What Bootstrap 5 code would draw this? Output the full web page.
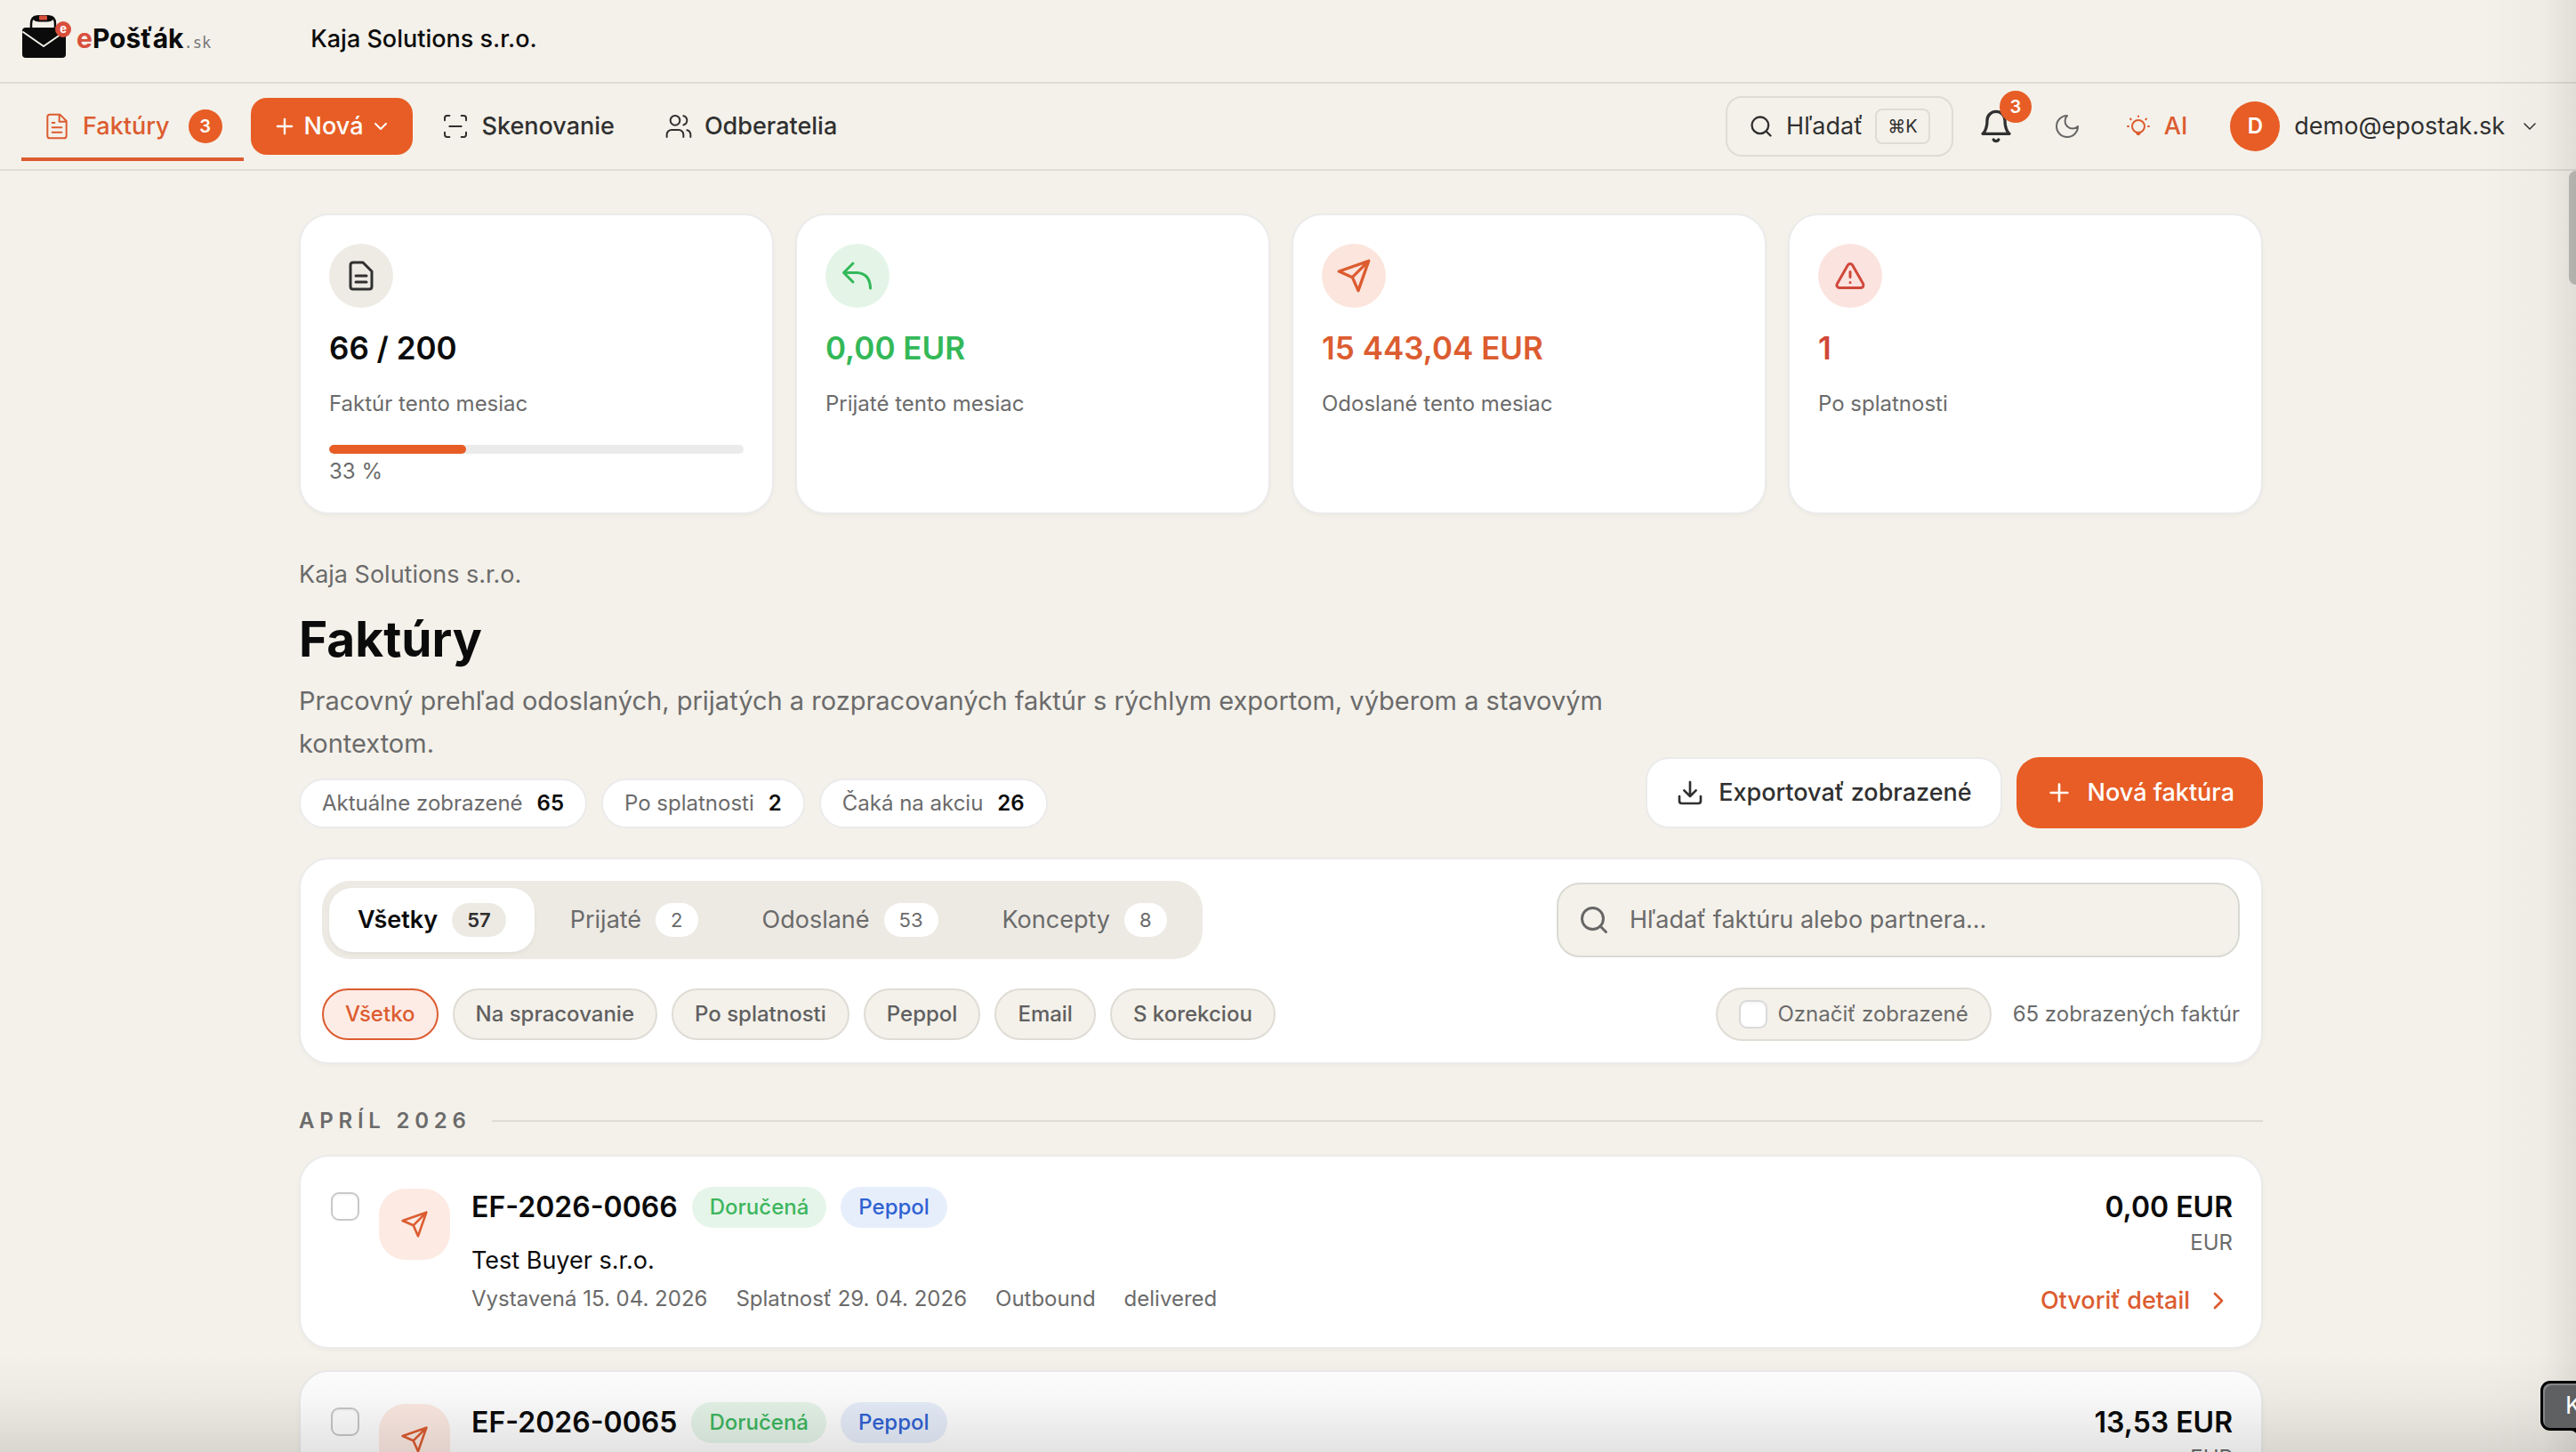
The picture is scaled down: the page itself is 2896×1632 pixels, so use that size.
<!DOCTYPE html>
<html lang="sk">
<head>
<meta charset="utf-8">
<meta name="viewport" content="width=device-width, initial-scale=1">
<title>Faktúry – ePošťák</title>
<link href="https://cdn.jsdelivr.net/npm/bootstrap@5.3.0/dist/css/bootstrap.min.css" rel="stylesheet">
<style>
:root{--paper:#f4f1ea;--line:#dfdcd5;--soft:#ebebeb;--ink:#0b0b0b;--ink2:#303030;--muted:#6b6b6b;--brand:#e75d25;--brand-ink:#dc5c30}
body{font-family:Inter,"Noto Sans",sans-serif;font-size:27px;line-height:40px;color:var(--ink);background:var(--paper)}
svg{display:block;flex:none;fill:none;stroke:currentColor;stroke-width:2;stroke-linecap:round;stroke-linejoin:round}
button{font:inherit;color:inherit}
a{color:inherit;text-decoration:none}
.i24{width:24px;height:24px}.i28{width:28px;height:28px}.i32{width:32px;height:32px}.i36{width:36px;height:36px}.i40{width:40px;height:40px}
.thin{stroke-width:1.5}
.app-shell{position:relative;height:100vh;overflow:hidden}
.small-text{font-size:24px;line-height:40px}
.text-soft{color:var(--muted)}
.orange{color:var(--brand-ink)}

.topbar{padding:16px 24px 20px;border-bottom:2px solid var(--line)}
.brand-logo{gap:6px;margin-right:112px}
.brand-name{font-size:30px;font-weight:700}
.brand-name i{font-style:normal;color:#d84f3c}
.brand-tld{font:17px "DejaVu Sans Mono",monospace;color:#777}
.brand-mark{width:56px;height:56px}
.company{font-weight:500}

.mainnav{height:98px;padding:0 24px;border-bottom:2px solid var(--line);gap:8px}
.nav-tab{height:78px;padding:0 24px;gap:13px;border:solid transparent;border-width:4px 0;font-weight:500;color:var(--ink2)}
.nav-tab.current{color:var(--brand-ink);border-bottom-color:var(--brand-ink)}
.dot-count{height:38px;min-width:38px;border-radius:19px;background:var(--brand);color:#fff;font-size:20px;font-weight:600}
.nav-tab .dot-count{margin-left:8px}
.btn-brand,.btn-brand:hover{background:var(--brand);color:#fff;border:0}
.btn-new,.btn-tall{font-size:27px;line-height:40px;font-weight:500;white-space:nowrap;flex:none}
.btn-new{height:64px;padding:0 24px;gap:8px;border-radius:18px}
.plain{border:0;background:none;padding:0;height:72px;color:var(--ink2)}
.btn-find{height:68px;padding:0 24px;gap:14px;border:2px solid var(--line);border-radius:18px;background:none;color:var(--ink2)}
.btn-find kbd{font:20px/24px Inter,sans-serif;color:var(--ink2);background:none;border:2px solid var(--line);border-radius:8px;padding:6px 12px}
.tools{gap:12px}
.bell{width:72px}
.bell .dot-count{position:absolute;left:40px;top:-4px;height:36px;min-width:36px}
.moon{width:64px;color:#666}
.ai{padding:0 20px;gap:13px;color:var(--brand-ink);font-weight:500}
.user{padding:0 16px;gap:16px}
.avatar{width:56px;height:56px;border-radius:50%;background:var(--brand);color:#fff;font-size:24px;font-weight:600}

.page{padding:48px 16px 0 0}
.page-inner{max-width:2208px;margin:0 auto}
.panel{background:#fff;border:2px solid var(--soft);border-radius:34px;box-shadow:0 2px 4px rgba(0,0,0,.03)}
.stats{display:grid;grid-template-columns:repeat(4,1fr);gap:24px;margin-bottom:48px}
.stat{padding:32px 32px 26px}
.stat-icon{width:72px;height:72px;border-radius:50%;margin-bottom:23px}
.stat-value{font-size:35px;line-height:44px;font-weight:600;margin-bottom:21px}
.meter{height:10px;margin-top:26px;border-radius:5px;background:#ebebeb}
.meter .progress-bar{background:var(--brand);border-radius:5px}

.page-title{font-size:55px;line-height:64px;font-weight:700;margin:20px 0 14px}
.page-desc{font-size:29px;line-height:48px;max-width:1520px;margin:0 0 15px}
.heading{margin-bottom:33px}
.fact{height:56px;padding:0 24px;gap:16px;background:#fff;border:2px solid var(--soft);border-radius:28px}
.fact strong{font-weight:600;color:var(--ink)}
.btn-tall{height:80px;padding:0 32px;gap:16px;border-radius:26px}
.btn-export,.btn-export:hover{background:#fff;color:var(--ink2);border:2px solid var(--soft);padding:0 32px}

.toolbar{padding:24px;margin-bottom:44px}
.seg{background:#edeae4;border-radius:32px;padding:8px;gap:8px}
.seg button{height:72px;padding:0 32px;gap:16px;border:0;background:none;border-radius:26px;color:var(--muted)}
.seg button.on{background:#fff;color:var(--ink);font-weight:600;box-shadow:0 2px 4px rgba(0,0,0,.05)}
.seg .num{height:38px;padding:0 17px;border-radius:19px;background:#fff;font-size:22px;line-height:38px}
.seg .on .num{background:#edeae4;color:var(--ink2)}
.finder{width:768px;height:84px;padding:0 22px;gap:22px;background:var(--paper);border:2px solid #d9dad3;border-radius:26px;color:#666}
.finder input{border:0;background:none;outline:0;padding:0;color:var(--ink)}
.finder input::placeholder{color:#6b6b6b;opacity:1}
.filters{margin-top:32px}
.chip{height:58px;padding:0 24px;border:2px solid var(--line);border-radius:29px;background:var(--paper);color:#606060;font-weight:500}
.chip.on{background:#fdece6;border-color:var(--brand-ink);color:var(--brand-ink)}
.mark-all{height:60px;padding:0 24px;gap:12px;border:2px solid var(--line);border-radius:30px;background:var(--paper)}
.tick.form-check-input{width:32px;height:32px;margin:0;border:2px solid #c8c8c8;border-radius:9px;flex:none;background-color:#fff;box-shadow:inset 0 2px 2px rgba(0,0,0,.04)}
.mark-all .tick.form-check-input{border-color:#dadada}
.month{gap:23px;margin-bottom:18px;font-weight:600;letter-spacing:.24em}
.month hr{margin:0;border:0;border-top:2px solid var(--line);opacity:1}

.invoice{padding:32px;margin-bottom:24px}
.tick-col{width:36px;margin:8px 20px 0 0}
.tile{width:80px;height:80px;border-radius:30px;margin:4px 24px 0 0;background:#fdeae3;color:var(--brand-ink)}
.inv-title{font-size:32px;line-height:50px;font-weight:600}
.inv-head{margin-bottom:15px}
.tag{height:46px;padding:0 20px;border-radius:23px;font-size:24px;line-height:46px;font-weight:500}
.tag-ok{background:#e6f5e9;color:#3db65f}
.tag-net{background:#e7eefb;color:#2f62d3}
.inv-meta{gap:32px;margin-top:3px}
.currency{font-size:24px;line-height:30px}
.detail{margin-top:30px;gap:16px;font-weight:500}

.thumb{position:absolute;right:0;top:192px;width:8px;height:128px;border-radius:8px 0 0 8px;background:#c1bfb9}
.shade-b,.shade-r{position:absolute;pointer-events:none;right:0;bottom:0}
.shade-b{left:0;height:110px;background:linear-gradient(rgba(0,0,0,0),rgba(0,0,0,.03) 45%,rgba(0,0,0,.11))}
.shade-r{top:0;width:110px;background:linear-gradient(90deg,rgba(0,0,0,0),rgba(0,0,0,.02) 65%,rgba(0,0,0,.08))}
.dock-tip{position:absolute;right:-4px;top:1552px;width:44px;height:56px;padding-left:25px;border:3px solid #000;border-right:0;border-radius:11px 0 0 11px;background:#5f6062;box-shadow:inset 2px 2px 0 #858688;color:#fff;line-height:50px}
.dock-tip svg{position:absolute;left:32px;top:50px;width:12px;height:12px;stroke:#000;stroke-width:3;fill:#5f6062}
</style>
</head>
<body>
<svg width="0" height="0" class="position-absolute" aria-hidden="true">
<symbol id="plus" viewBox="0 0 24 24"><path d="M5 12h14M12 5v14"/></symbol>
<symbol id="down" viewBox="0 0 24 24"><path d="m6 9 6 6 6-6"/></symbol>
<symbol id="search" viewBox="0 0 24 24"><circle cx="11" cy="11" r="8"/><path d="m21 21-4.3-4.3"/></symbol>
<symbol id="send" viewBox="0 0 24 24"><path d="m22 2-7 20-4-9-9-4ZM22 2 11 13"/></symbol>
</svg>
<div class="app-shell">
<header>
  <div class="topbar d-flex align-items-center">
    <a href="#" class="brand-logo d-flex align-items-center">
      <svg class="brand-mark" viewBox="0 0 56 56" stroke="none">
        <path d="M11 17V11Q11 2.500 18 2.500H31Q38 2.500 38 11V17" stroke="#0b0b0b" stroke-width="2.500"/>
        <path d="M13 6Q16 1 20 1H29Q33 1 36 6Q33 8.500 29 8.500H20Q16 8.500 13 6Z" fill="#0b0b0b" stroke="none"/>
        <rect x="20" y="1.500" width="9" height="5" rx="1" fill="#d84f3c" stroke="none"/>
        <rect x="1" y="15" width="49" height="34" rx="4" fill="#0b0b0b" stroke="none"/>
        <path d="M2 20 25 36 48 20" stroke="#f4f1ea" stroke-width="2"/>
        <circle cx="47" cy="17" r="9" fill="#d84f3c" stroke="none"/>
        <text x="47" y="21" font-size="13" font-weight="700" text-anchor="middle" fill="#fff" stroke="none">e</text>
      </svg>
      <span><span class="brand-name"><i>e</i>Pošťák</span><span class="brand-tld">.sk</span></span>
    </a>
    <span class="company">Kaja Solutions s.r.o.</span>
  </div>
  <nav class="mainnav d-flex align-items-center">
    <a href="#" class="nav-tab current d-flex align-items-center" aria-current="page">
      <svg class="i32 thin" viewBox="0 0 24 24"><path d="M14.500 2H6a2 2 0 0 0-2 2v16a2 2 0 0 0 2 2h12a2 2 0 0 0 2-2V7.500ZM14 2v6h6M8 9h2M8 13h8M8 17h8"/></svg>
      Faktúry<span class="dot-count d-flex align-items-center justify-content-center">3</span></a>
    <button type="button" class="btn btn-brand btn-new d-flex align-items-center"><svg class="i28"><use href="#plus"/></svg>Nová<svg class="i24"><use href="#down"/></svg></button>
    <a href="#" class="nav-tab d-flex align-items-center"><svg class="i32 thin" viewBox="0 0 24 24"><path d="M3 7V5a2 2 0 0 1 2-2h2M17 3h2a2 2 0 0 1 2 2v2M21 17v2a2 2 0 0 1-2 2h-2M7 21H5a2 2 0 0 1-2-2v-2M7 12h10"/></svg>Skenovanie</a>
    <a href="#" class="nav-tab d-flex align-items-center"><svg class="i32 thin" viewBox="0 0 24 24"><path d="M16 21v-2a4 4 0 0 0-4-4H6a4 4 0 0 0-4 4v2M22 21v-2a4 4 0 0 0-3-3.870M16 3.130a4 4 0 0 1 0 7.750"/><circle cx="9" cy="7" r="4"/></svg>Odberatelia</a>
    <div class="tools d-flex align-items-center ms-auto">
      <button type="button" class="btn-find d-flex align-items-center"><svg class="i28"><use href="#search"/></svg>Hľadať<kbd>⌘K</kbd></button>
      <button type="button" class="plain bell position-relative d-flex align-items-center justify-content-center" aria-label="Upozornenia"><svg class="i40" viewBox="0 0 24 24"><path d="M6 8a6 6 0 0 1 12 0c0 7 3 9 3 9H3s3-2 3-9M10.300 21a1.940 1.940 0 0 0 3.400 0"/></svg><span class="dot-count d-flex align-items-center justify-content-center">3</span></button>
      <button type="button" class="plain moon d-flex align-items-center justify-content-center" aria-label="Tmavý režim"><svg class="i32 thin" viewBox="0 0 24 24"><path d="M12 3a6 6 0 0 0 9 9 9 9 0 1 1-9-9Z"/></svg></button>
      <button type="button" class="plain ai d-flex align-items-center"><svg class="i32" viewBox="0 0 32 32"><circle cx="16" cy="16" r="7"/><path d="M14 23.500h4M15 25h2M16 4.500v.5M4 16h1M27 16h1M7 7.500l.7.7M25 7.500l-.7.7"/></svg>AI</button>
      <button type="button" class="plain user d-flex align-items-center"><span class="avatar d-flex align-items-center justify-content-center">D</span>demo@epostak.sk<svg class="i24 thin"><use href="#down"/></svg></button>
    </div>
  </nav>
</header>

<main class="page"><div class="page-inner">
  <section class="stats">
    <div class="panel stat">
      <div class="stat-icon d-flex align-items-center justify-content-center" style="background:#eeebe5;color:#303030"><svg class="i36" viewBox="0 0 36 36"><path d="M9 3H20L30 13V30Q30 33 27 33H9Q6 33 6 30V6Q6 3 9 3ZM12 18H24M12 25H24" stroke-width="3"/></svg></div>
      <div class="stat-value">66 / 200</div>
      <div class="small-text text-soft">Faktúr tento mesiac</div>
      <div class="progress meter" role="progressbar" aria-valuenow="33" aria-valuemin="0" aria-valuemax="100" aria-label="Využitie"><div class="progress-bar" style="width:33%"></div></div>
      <div class="small-text text-soft">33 %</div>
    </div>
    <div class="panel stat">
      <div class="stat-icon d-flex align-items-center justify-content-center" style="background:#e4f5e8;color:#34b858"><svg class="i36" viewBox="0 0 36 36"><path d="M13 4 2.500 14.500 13 25M3 14.500H17Q32 15 32.500 32" stroke-width="3"/></svg></div>
      <div class="stat-value" style="color:#34b858">0,00 EUR</div>
      <div class="small-text text-soft">Prijaté tento mesiac</div>
    </div>
    <div class="panel stat">
      <div class="stat-icon d-flex align-items-center justify-content-center" style="background:#fbe5dd;color:#dc5c30"><svg class="i40"><use href="#send"/></svg></div>
      <div class="stat-value orange">15 443,04 EUR</div>
      <div class="small-text text-soft">Odoslané tento mesiac</div>
    </div>
    <div class="panel stat">
      <div class="stat-icon d-flex align-items-center justify-content-center" style="background:#fbe3df;color:#d0483b"><svg class="i36" viewBox="0 0 24 24"><path d="m21.730 18-8-14a2 2 0 0 0-3.480 0l-8 14A2 2 0 0 0 4 21h16a2 2 0 0 0 1.730-3ZM12 9v4M12 17h.01"/></svg></div>
      <div class="stat-value" style="color:#d0483b">1</div>
      <div class="small-text text-soft">Po splatnosti</div>
    </div>
  </section>

  <section class="heading d-flex justify-content-between align-items-end">
    <div>
      <div class="text-soft">Kaja Solutions s.r.o.</div>
      <h1 class="page-title">Faktúry</h1>
      <p class="page-desc text-soft">Pracovný prehľad odoslaných, prijatých a rozpracovaných faktúr s rýchlym exportom, výberom a stavovým kontextom.</p>
      <div class="d-flex gap-3 small-text text-soft">
        <span class="fact d-flex align-items-center">Aktuálne zobrazené <strong>65</strong></span>
        <span class="fact d-flex align-items-center">Po splatnosti <strong>2</strong></span>
        <span class="fact d-flex align-items-center">Čaká na akciu <strong>26</strong></span>
      </div>
    </div>
    <div class="d-flex gap-3">
      <button type="button" class="btn btn-tall btn-export d-flex align-items-center"><svg class="i32" viewBox="0 0 24 24"><path d="M21 15v4a2 2 0 0 1-2 2H5a2 2 0 0 1-2-2v-4M7 10l5 5 5-5M12 15V3"/></svg>Exportovať zobrazené</button>
      <button type="button" class="btn btn-tall btn-brand d-flex align-items-center"><svg class="i32"><use href="#plus"/></svg>Nová faktúra</button>
    </div>
  </section>

  <section class="panel toolbar">
    <div class="d-flex justify-content-between align-items-center">
      <div class="seg d-flex">
        <button type="button" class="on d-flex align-items-center">Všetky<span class="num">57</span></button>
        <button type="button" class="d-flex align-items-center">Prijaté<span class="num">2</span></button>
        <button type="button" class="d-flex align-items-center">Odoslané<span class="num">53</span></button>
        <button type="button" class="d-flex align-items-center">Koncepty<span class="num">8</span></button>
      </div>
      <label class="finder d-flex align-items-center"><svg class="i36"><use href="#search"/></svg><input type="search" class="flex-grow-1" placeholder="Hľadať faktúru alebo partnera..." aria-label="Hľadať faktúru alebo partnera"></label>
    </div>
    <div class="filters d-flex justify-content-between align-items-center small-text">
      <div class="d-flex gap-3">
        <button type="button" class="chip on">Všetko</button>
        <button type="button" class="chip">Na spracovanie</button>
        <button type="button" class="chip">Po splatnosti</button>
        <button type="button" class="chip">Peppol</button>
        <button type="button" class="chip">Email</button>
        <button type="button" class="chip">S korekciou</button>
      </div>
      <div class="d-flex align-items-center gap-4 text-soft">
        <label class="mark-all d-flex align-items-center"><input type="checkbox" class="form-check-input tick">Označiť zobrazené</label>
        <span>65 zobrazených faktúr</span>
      </div>
    </div>
  </section>

  <div class="month d-flex align-items-center small-text text-soft">APRÍL 2026<hr class="flex-grow-1"></div>

  <article class="panel invoice d-flex align-items-start">
    <div class="tick-col d-flex justify-content-center"><input type="checkbox" class="form-check-input tick" aria-label="Označiť EF-2026-0066"></div>
    <div class="tile d-flex align-items-center justify-content-center"><svg class="i32"><use href="#send"/></svg></div>
    <div class="flex-grow-1">
      <div class="inv-head d-flex align-items-center gap-3"><span class="inv-title">EF-2026-0066</span><span class="tag tag-ok">Doručená</span><span class="tag tag-net">Peppol</span></div>
      <div>Test Buyer s.r.o.</div>
      <div class="inv-meta d-flex small-text text-soft"><span>Vystavená 15. 04. 2026</span><span>Splatnosť 29. 04. 2026</span><span>Outbound</span><span>delivered</span></div>
    </div>
    <div class="d-flex flex-column align-items-end">
      <div class="inv-title">0,00 EUR</div>
      <div class="currency text-soft">EUR</div>
      <a href="#" class="detail orange d-flex align-items-center">Otvoriť detail<svg class="i32" viewBox="0 0 24 24"><path d="m9 18 6-6-6-6"/></svg></a>
    </div>
  </article>

  <article class="panel invoice d-flex align-items-start">
    <div class="tick-col d-flex justify-content-center"><input type="checkbox" class="form-check-input tick" aria-label="Označiť EF-2026-0065"></div>
    <div class="tile d-flex align-items-center justify-content-center"><svg class="i32"><use href="#send"/></svg></div>
    <div class="flex-grow-1">
      <div class="inv-head d-flex align-items-center gap-3"><span class="inv-title">EF-2026-0065</span><span class="tag tag-ok">Doručená</span><span class="tag tag-net">Peppol</span></div>
    </div>
    <div class="d-flex flex-column align-items-end">
      <div class="inv-title">13,53 EUR</div>
      <div class="currency text-soft">EUR</div>
    </div>
  </article>
</div></main>

<div class="thumb"></div>
<div class="shade-b"></div>
<div class="shade-r"></div>
<div class="dock-tip" role="tooltip">K<svg viewBox="0 0 12 12"><path d="M0 1.500Q6 2 9 9"/></svg></div>
</div>
<script src="https://cdn.jsdelivr.net/npm/bootstrap@5.3.0/dist/js/bootstrap.bundle.min.js"></script>
</body>
</html>
